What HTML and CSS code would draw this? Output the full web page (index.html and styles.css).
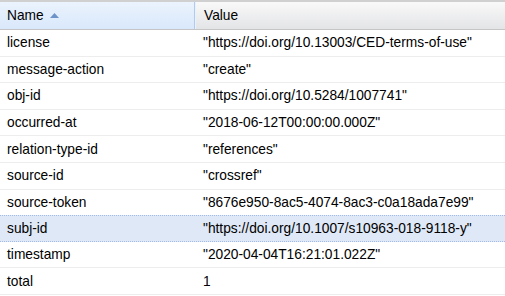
FILE: index.html
```html
<!DOCTYPE html>
<html lang="en">
<head>
    <meta charset="UTF-8">
    <title>Properties</title>
    <link rel="stylesheet" href="styles.css">
</head>
<body>
    <div class="grid">
        <!-- Header -->
        <div class="grid-header">
            <div class="col-head col-name sorted">
                Name
                <svg class="sort-arrow" width="9" height="5" viewBox="0 0 9 5"><path d="M0 5 L4.5 0 L9 5 Z" fill="#6d93c8"/></svg>
            </div>
            <div class="col-head col-value">Value</div>
        </div>

        <!-- Rows -->
        <div class="row"><div class="cell col-name">license</div><div class="cell">"https://doi.org/10.13003/CED-terms-of-use"</div></div>
        <div class="row"><div class="cell col-name">message-action</div><div class="cell">"create"</div></div>
        <div class="row"><div class="cell col-name">obj-id</div><div class="cell">"https://doi.org/10.5284/1007741"</div></div>
        <div class="row"><div class="cell col-name">occurred-at</div><div class="cell">"2018-06-12T00:00:00.000Z"</div></div>
        <div class="row"><div class="cell col-name">relation-type-id</div><div class="cell">"references"</div></div>
        <div class="row"><div class="cell col-name">source-id</div><div class="cell">"crossref"</div></div>
        <div class="row"><div class="cell col-name">source-token</div><div class="cell">"8676e950-8ac5-4074-8ac3-c0a18ada7e99"</div></div>
        <div class="row selected"><div class="cell col-name">subj-id</div><div class="cell">"https://doi.org/10.1007/s10963-018-9118-y"</div></div>
        <div class="row"><div class="cell col-name">timestamp</div><div class="cell">"2020-04-04T16:21:01.022Z"</div></div>
        <div class="row"><div class="cell col-name">total</div><div class="cell">1</div></div>
    </div>
</body>
</html>
```

FILE: styles.css
```css
body {
    margin: 0;
    padding: 0;
    background: #fff;
    font-family: "Liberation Sans", Arial, sans-serif;
    font-size: 13.75px;
    color: #000;
}

.grid {
    width: 505px;
}

.grid-header {
    display: flex;
    height: 27px;
    border-top: 2px solid #d0d0d0;
    border-bottom: 1px solid #c5c5c5;
    background: linear-gradient(#f9f9f9, #e3e4e6);
}

.col-head {
    display: flex;
    align-items: center;
    padding-left: 7px;
    box-sizing: border-box;
}

.col-name {
    width: 195px;
    flex-shrink: 0;
}

.col-head.sorted {
    background: linear-gradient(#ebf3fd, #d9e8fb);
    border-right: 1px solid #aaccf6;
}

.sort-arrow {
    margin-left: 6px;
    margin-top: -1px;
}

.col-value {
    flex-grow: 1;
    padding-left: 8px;
    border-left: 1px solid #f0f0f0;
}

.row {
    display: flex;
    align-items: center;
    height: 25.6px;
    border-bottom: 1px solid #ededed;
}

.cell {
    padding-left: 7px;
    box-sizing: border-box;
    white-space: nowrap;
}

.cell + .cell {
    padding-left: 8px;
}

.row.selected {
    background: #dfe8f6;
    border-top: 1px dotted #a3bae9;
    border-bottom: 1px dotted #a3bae9;
    height: 24.6px;
    margin-top: -1px;
}
```
